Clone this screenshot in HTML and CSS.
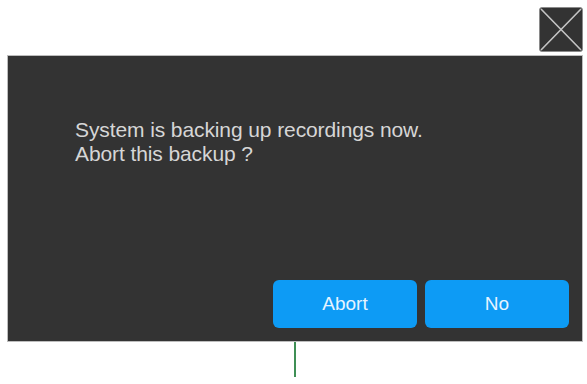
FILE: index.html
```html
<!DOCTYPE html>
<html>
<head>
<meta charset="utf-8">
<link rel="stylesheet" href="styles.css">
</head>
<body>
<div class="screen">
  <div class="top">
    <button class="close" aria-label="Close">
      <svg width="44" height="45" viewBox="0 0 44 45"><path d="M2 2 L42 43 M42 2 L2 43" stroke="#c4c4c4" stroke-width="1.6" fill="none"/></svg>
    </button>
  </div>
  <div class="dialog">
    <div class="message">
      <p>System is backing up recordings now.</p>
      <p>Abort this backup ?</p>
    </div>
    <div class="actions">
      <button class="btn">Abort</button>
      <button class="btn">No</button>
    </div>
  </div>
  <div class="stem"></div>
</div>
</body>
</html>
```
FILE: styles.css
```css
html, body {
  margin: 0;
  padding: 0;
  background: #ffffff;
}
.screen {
  width: 587px;
  height: 384px;
  display: flex;
  flex-direction: column;
  font-family: "Liberation Sans", Arial, sans-serif;
}
.top {
  display: flex;
  justify-content: flex-end;
  padding: 7px 4px 0 0;
}
.close {
  width: 44px;
  height: 45px;
  padding: 0;
  margin: 0;
  border: 1px solid #8a8a8a;
  border-radius: 3px;
  background: #333333;
  box-sizing: border-box;
  display: flex;
  align-items: center;
  justify-content: center;
  overflow: hidden;
}
.close svg {
  display: block;
  flex: none;
}
.dialog {
  margin: 3px 4px 0 7px;
  height: 287px;
  background: #333333;
  border: 1px solid #bdbdbd;
  box-sizing: border-box;
  display: flex;
  flex-direction: column;
  justify-content: space-between;
}
.message {
  padding: 62px 0 0 67px;
  color: #d6d6d6;
  font-size: 21px;
  line-height: 24px;
  letter-spacing: -0.1px;
}
.message p {
  margin: 0;
}
.actions {
  display: flex;
  justify-content: flex-end;
  gap: 8px;
  padding: 0 13px 13px 0;
}
.btn {
  width: 144px;
  height: 48px;
  border: none;
  border-radius: 6px;
  background: #0d9bf5;
  color: #e6f4ff;
  font-family: "Liberation Sans", Arial, sans-serif;
  font-size: 19px;
  letter-spacing: 0;
  padding: 0;
}
.stem {
  margin-left: 294px;
  width: 2px;
  height: 35px;
  background: #3f8f55;
}
```
